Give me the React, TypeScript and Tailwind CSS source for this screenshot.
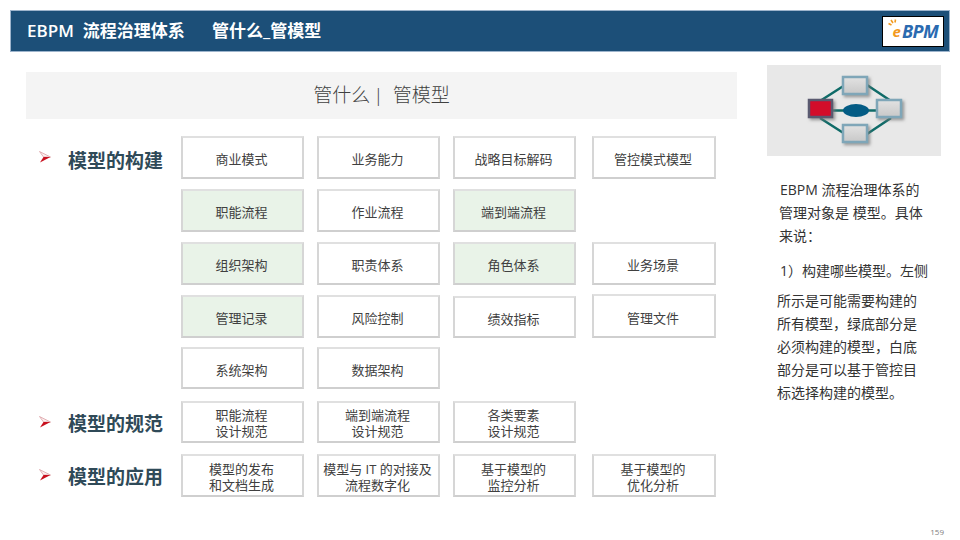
const cjk = "font-['Open_Sans','Noto_Sans_CJK_SC',sans-serif]";

type Cell = { text: string; sub?: string; green?: boolean; className?: string };

function Box({ text, sub, green, className }: Cell) {
  return (
    <div
      className={`flex w-[123px] shrink-0 items-center justify-center whitespace-nowrap border-2 border-x-[#d6d6d6] border-t-[#e0e0e0] border-b-[#cfcfcf] pr-[2px] text-center text-[13px] leading-[16px] text-[#404040] ${
        sub ? "pt-[2px]" : "pt-[3px]"
      } ${green ? "bg-[#e9f3e8]" : "bg-white"} ${className ?? ""}`}
    >
      <span>
        {text}
        {sub && <br />}
        {sub}
      </span>
    </div>
  );
}

function Arrow() {
  return (
    <svg width="12" height="12" viewBox="0 0 12 12" className="mt-[15px] shrink-0">
      <path d="M0.5 0.5 L11.5 6 L4.5 6 Z" fill="#fbeeee" stroke="#dca0a4" strokeWidth="0.8" />
      <path d="M4.5 6 L11.5 6 L1 11.5 Z" fill="#c8101e" />
    </svg>
  );
}

function Label({ text, top }: { text: string; top: string }) {
  return (
    <div className="flex w-[155px] shrink-0 items-start gap-[17px] pl-[13px]">
      <Arrow />
      <span className={`text-[19px] font-bold leading-[24px] text-[#2f4a58] ${top}`}>{text}</span>
    </div>
  );
}

function Row({ label, top = "mt-[11px]", cells, h = "h-[43px]" }: { label?: string; top?: string; cells: Cell[]; h?: string }) {
  return (
    <div className={`flex ${h}`}>
      {label ? <Label text={label} top={top} /> : <div className="w-[155px] shrink-0" />}
      <div className="flex gap-[13px]">
        {cells.map((c, i) => (
          <Box key={i} {...c} className={`${i === 3 ? "ml-[3px] w-[124px]" : ""} ${c.className ?? ""}`} />
        ))}
      </div>
    </div>
  );
}

function Logo() {
  return (
    <div className="flex h-[31px] w-[62px] items-center justify-center border border-black bg-white pl-[5px] font-['Open_Sans',sans-serif] italic">
      <span className="relative text-[15px] font-bold leading-none text-[#f29a1f]">
        e
        <svg width="10" height="9" viewBox="0 0 10 9" className="absolute -left-[5px] -top-[5px]">
          <path d="M7.5 0.5 L7 3.5 M3 1 L5 4 M0.5 4.5 L3.5 6" stroke="#f29a1f" strokeWidth="1.6" fill="none" />
        </svg>
      </span>
      <span className="ml-[1px] text-[18px] font-bold leading-none tracking-[-0.5px] text-[#2a6ab0]">BPM</span>
    </div>
  );
}

function Diagram() {
  return (
    <svg width="174" height="91" viewBox="0 0 174 91">
      <defs>
        <filter id="s" x="-30%" y="-30%" width="170%" height="170%">
          <feDropShadow dx="2" dy="2" stdDeviation="1.5" floodColor="#777" floodOpacity="0.7" />
        </filter>
        <linearGradient id="g" x1="0" y1="0" x2="0" y2="1">
          <stop offset="0" stopColor="#e2e2e2" />
          <stop offset="1" stopColor="#c8c8c8" />
        </linearGradient>
      </defs>
      <path d="M53 36 L78 20 M100 20 L124 36 M53 53 L78 69 M100 69 L124 53 M64 45.5 L112 45.5" stroke="#0f6b68" strokeWidth="2.5" fill="none" />
      <ellipse cx="89" cy="45.5" rx="13" ry="6.5" fill="#045c85" />
      <rect x="42" y="35" width="23" height="17" fill="#d30b2c" stroke="#5a5a70" strokeWidth="2.5" filter="url(#s)" />
      {[
        [76, 12],
        [110, 35],
        [76, 60],
      ].map(([x, y]) => (
        <rect key={x + "-" + y} x={x} y={y} width={24} height={17} fill="url(#g)" stroke="#7fa6b8" strokeWidth="2.5" filter="url(#s)" />
      ))}
    </svg>
  );
}

export default function App() {
  return (
    <div className={`flex h-[540px] w-[960px] flex-col overflow-hidden bg-white ${cjk}`}>
      <div className="mx-[10px] mt-[10px] flex h-[42px] shrink-0 items-center justify-between border border-[#9db4cc] bg-[#1c4f78] pl-[16px] pr-[5px] text-white">
        <div className="flex items-center text-[17px] font-semibold">
          <span className="w-[185px] whitespace-pre">EBPM  流程治理体系</span>
          <span>管什么_管模型</span>
        </div>
        <Logo />
      </div>

      <div className="flex flex-1">
        <div className="ml-[26px] mt-[20px] w-[711px]">
          <div className="flex h-[47px] items-center justify-center bg-[#f4f4f4] text-[19px] font-light text-[#404040]">
            <span>管什么</span>
            <span className="ml-[3px] mr-[9px]">|</span>
            <span>管模型</span>
          </div>
          <div className="mt-[17px] flex flex-col gap-[10px]">
            <Row
              label="模型的构建"
              top="mt-[13px]"
              cells={[{ text: "商业模式" }, { text: "业务能力" }, { text: "战略目标解码" }, { text: "管控模式模型" }]}
            />
            <Row cells={[{ text: "职能流程", green: true }, { text: "作业流程" }, { text: "端到端流程", green: true }]} />
            <Row
              cells={[
                { text: "组织架构", green: true },
                { text: "职责体系" },
                { text: "角色体系", green: true },
                { text: "业务场景" },
              ]}
            />
            <Row
              cells={[
                { text: "管理记录", green: true },
                { text: "风险控制" },
                { text: "绩效指标", className: "mt-px" },
                { text: "管理文件", className: "-mt-px" },
              ]}
            />
            <div className="-mt-px">
              <Row cells={[{ text: "系统架构" }, { text: "数据架构" }]} h="h-[42px]" />
            </div>
            <div className="mt-[2px]">
              <Row
                label="模型的规范"
                h="h-[42px]"
                cells={[
                  { text: "职能流程", sub: "设计规范" },
                  { text: "端到端流程", sub: "设计规范" },
                  { text: "各类要素", sub: "设计规范" },
                ]}
              />
            </div>
            <div className="mt-px">
              <Row
                label="模型的应用"
                cells={[
                  { text: "模型的发布", sub: "和文档生成" },
                  { text: "模型与 IT 的对接及", sub: "流程数字化" },
                  { text: "基于模型的", sub: "监控分析" },
                  { text: "基于模型的", sub: "优化分析" },
                ]}
              />
            </div>
          </div>
        </div>

        <div className="ml-[30px] mt-[13px] w-[174px]">
          <div className="h-[91px] bg-[#e8e8e8]">
            <Diagram />
          </div>
          <div className="mt-[22px] whitespace-nowrap pl-[10px] text-[14px] leading-[23px] text-[#333]">
            <p className="pl-[3px]">EBPM 流程治理体系的</p>
            <p className="pl-[2px]">管理对象是 模型。具体</p>
            <p className="pl-[2px]">来说：</p>
            <p className="mt-[12px] pl-[3px]">1）构建哪些模型。左侧</p>
            <p className="mt-[7px]">所示是可能需要构建的</p>
            <p>所有模型，绿底部分是</p>
            <p>必须构建的模型，白底</p>
            <p>部分是可以基于管控目</p>
            <p>标选择构建的模型。</p>
          </div>
        </div>
      </div>

      <div className="flex h-[16px] shrink-0 justify-end pr-[16px] text-[8px] leading-[16px] text-[#808080]">159</div>
    </div>
  );
}
